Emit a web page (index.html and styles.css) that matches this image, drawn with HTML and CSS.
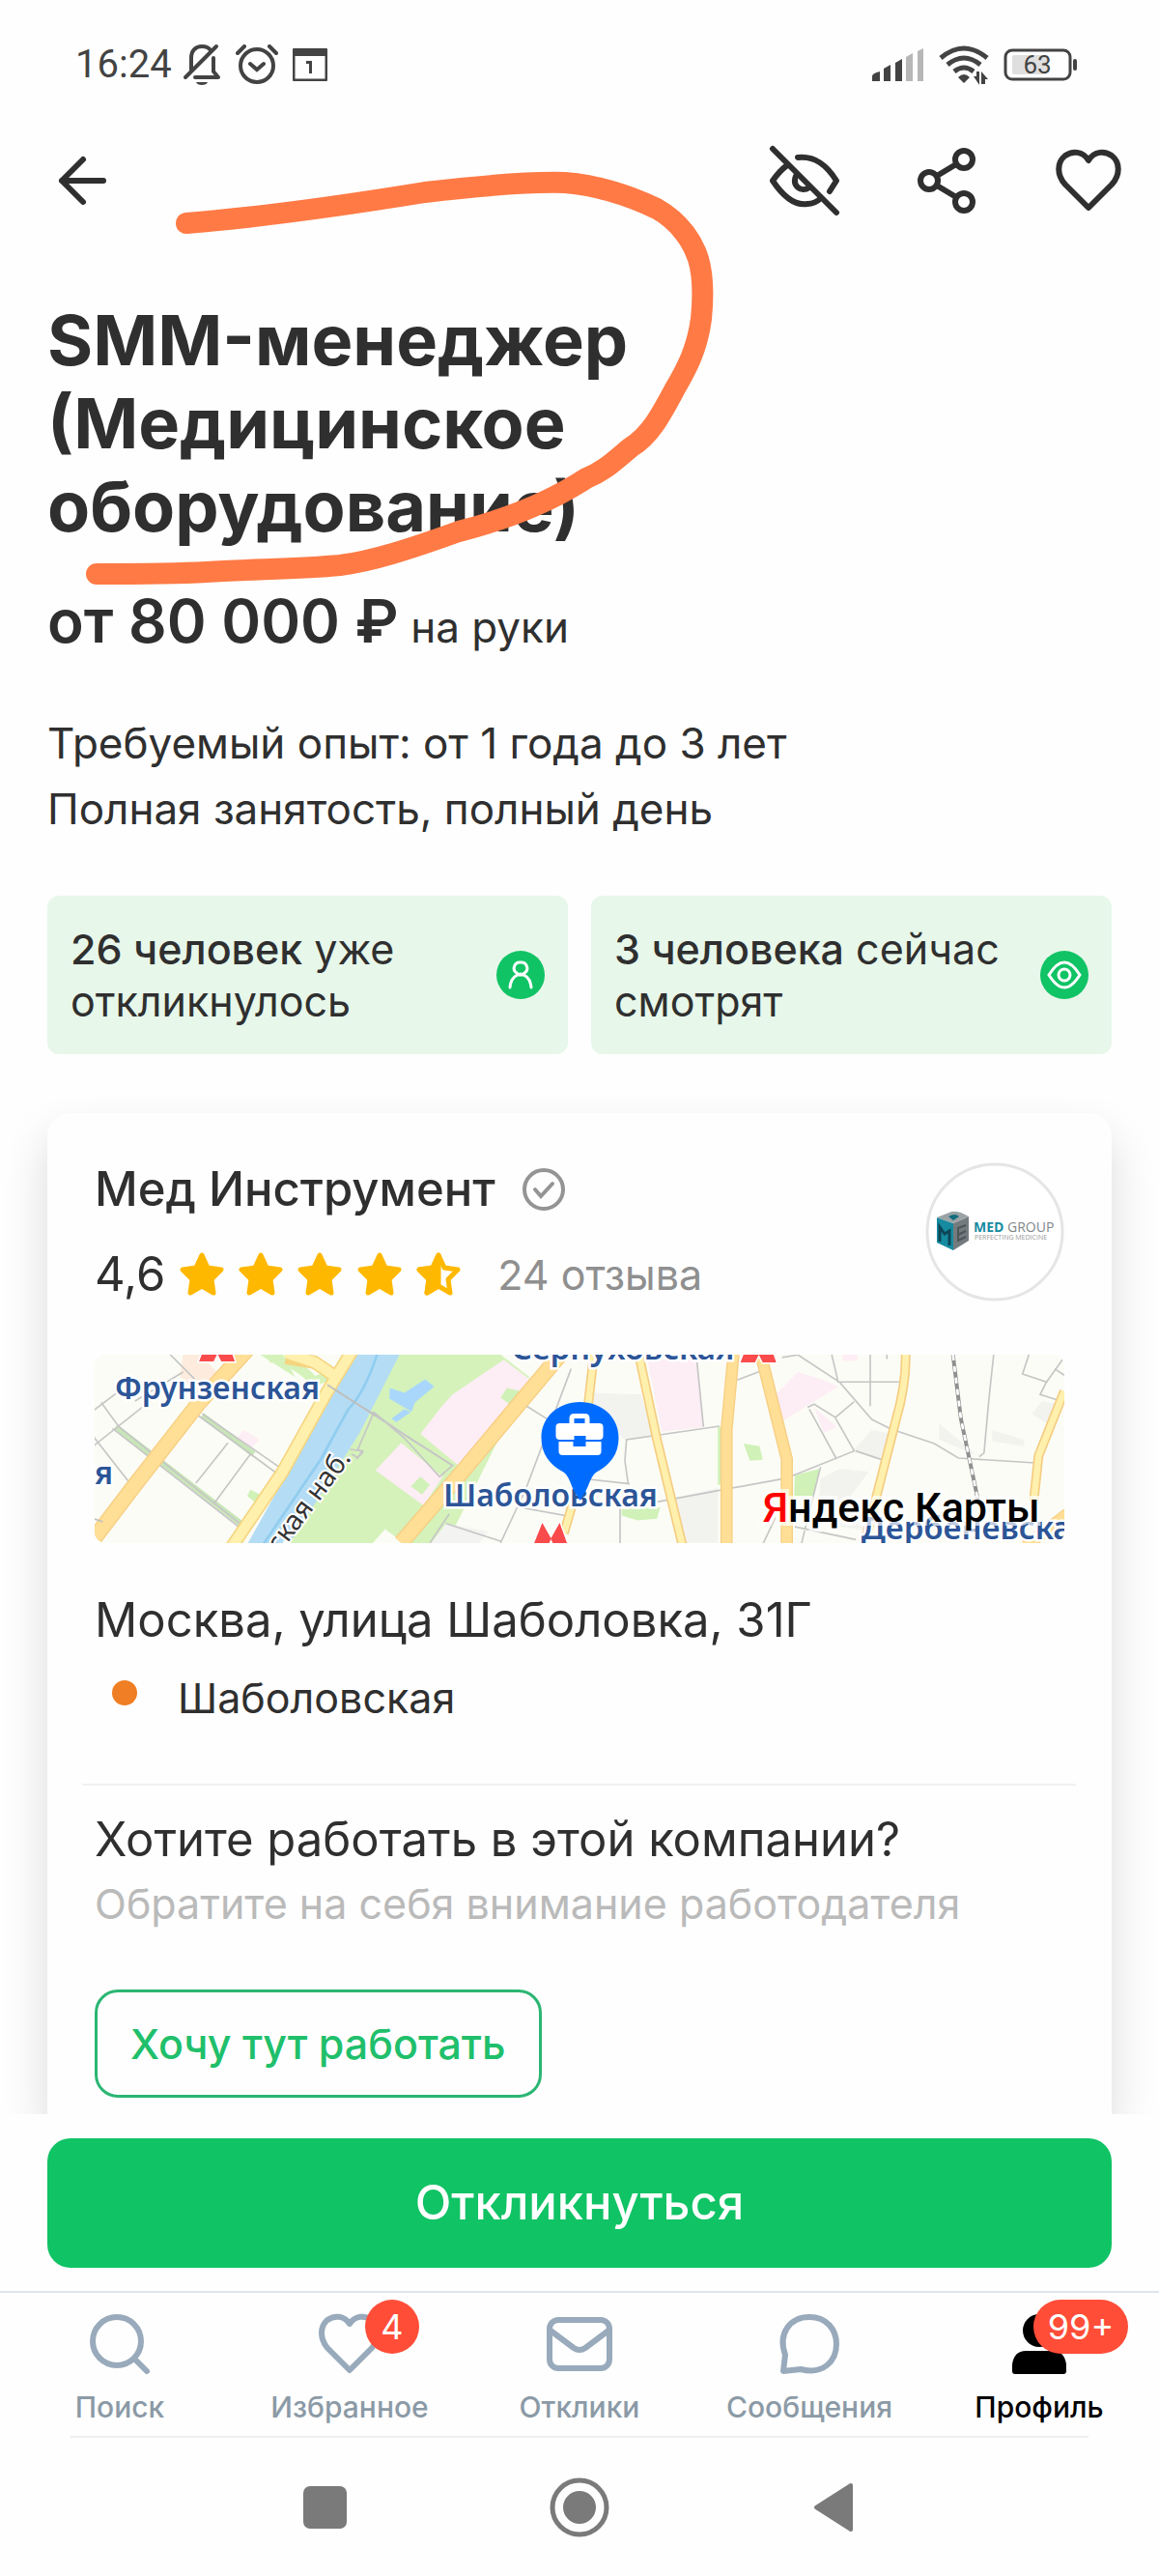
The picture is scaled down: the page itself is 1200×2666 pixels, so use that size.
FILE: index.html
```html
<!DOCTYPE html>
<html lang="ru">
<head>
<meta charset="utf-8">
<meta name="viewport" content="width=device-width, initial-scale=1">
<title>SMM-менеджер (Медицинское оборудование)</title>
<link rel="stylesheet" href="styles.css">
</head>
<body>
<div class="status-bar">
  <div class="status-group status-left">
    <span class="clock">16:24</span>
    <svg class="status-bell" width="40" height="44" viewBox="0 0 40 44" fill="none" stroke="#434343" stroke-width="4" stroke-linecap="round" stroke-linejoin="round"><path d="M9 29V15C9 7 14 3 20 3c4 0 7 1 9 4M32 15v14l5 6H13M3 35L35 3"/><path d="M14 40h12c-1 4-11 4-12 0z" fill="#434343" stroke="none"/></svg>
    <svg class="status-alarm" width="44" height="42" viewBox="0 0 44 42" fill="none" stroke="#434343" stroke-width="4" stroke-linecap="round"><circle cx="22" cy="22" r="17"/><path d="M15 20l7 6 7-6M2 9l7-7M42 9l-7-7"/></svg>
    <svg width="36" height="34" viewBox="0 0 36 34"><rect x="1" y="1" width="34" height="32" rx="2" fill="none" stroke="#434343" stroke-width="3"/><path d="M1 1h34v7H1zM14 13h6v13h-3V16h-3z" fill="#434343"/></svg>
  </div>
  <div class="status-group status-right">
    <svg width="54" height="34" viewBox="0 0 54 34"><path d="M0 34v-5q0-3 8-5v10zM12 34V21l7-4v17zM24 34V15l7-4v23z" fill="#434343"/><path d="M35 34V9l7-4v29zM47 34V3l6-3v34z" fill="#b7b7b7"/></svg>
    <svg width="52" height="42" viewBox="0 0 52 42" fill="none" stroke="#434343" stroke-width="5"><path d="M2 14q24-20 48 0M9 21q17-14 34 0M16 28q10-8 20 0"/><path d="M20 34q6-6 12 0l-6 6zM36 33h3v-5h3v14zM44 41V28l7 8h-3v5z" fill="#434343" stroke="none"/></svg>
    <svg width="77" height="34" viewBox="0 0 77 34"><rect x="9" y="7" width="36" height="20" rx="2" fill="#dfdfdf"/><rect x="2" y="2" width="67" height="30" rx="7" fill="none" stroke="#434343" stroke-width="3"/><rect x="72" y="11" width="4" height="12" rx="2" fill="#434343"/><text x="35" y="26" class="battery-text">63</text></svg>
  </div>
</div>

<header class="toolbar">
  <button class="icon-button" type="button" aria-label="Назад"><svg width="74" height="74" viewBox="0 0 74 74" class="line-icon"><path d="M38 15L16 37l22 22M16 37h43"/></svg></button>
  <div class="toolbar-actions">
    <button class="icon-button" type="button" aria-label="Скрыть вакансию"><svg width="74" height="74" viewBox="0 0 74 74" class="line-icon"><path d="M4 4l66 66M30 13c18-2 30 8 40 24l-7 11M19 21Q11 27 4 37q18 27 36 24 8 0 14-6M28 32c-4 10 5 18 14 12"/></svg></button>
    <button class="icon-button" type="button" aria-label="Поделиться"><svg width="74" height="74" viewBox="0 0 74 74" class="line-icon"><circle cx="19" cy="37" r="9"/><circle cx="55" cy="15" r="9"/><circle cx="55" cy="59" r="9"/><path d="M27 32l20-12M27 42l20 12"/></svg></button>
    <button class="icon-button" type="button" aria-label="В избранное"><svg width="74" height="74" viewBox="0 0 74 74" class="line-icon"><path d="M37 16C31 6 20 6 13 11 4 18 4 31 13 41L37 65 61 41C70 31 70 18 61 11 54 6 43 6 37 16z"/></svg></button>
  </div>
</header>

<main class="content">
  <h1 class="vacancy-title">SMM-менеджер (Медицинское оборудование)</h1>
  <p class="salary"><strong>от 80 000 ₽</strong> на руки</p>
  <div class="conditions">
    <p>Требуемый опыт: от 1 года до 3 лет</p>
    <p>Полная занятость, полный день</p>
  </div>

  <div class="stats">
    <div class="stat">
      <p><b>26 человек</b> уже откликнулось</p>
      <svg width="50" height="50" viewBox="0 0 50 50"><circle cx="25" cy="25" r="25" fill="#10c365"/><path d="M25 12a6 6 0 0 1 4 11q-4 4-8 0a6 6 0 0 1 4-11zM14 38q1-12 11-14 10 2 11 14" fill="none" stroke="#fff" stroke-width="3" stroke-linecap="round"/></svg>
    </div>
    <div class="stat">
      <p><b>3 человека</b> сейчас смотрят</p>
      <svg width="50" height="50" viewBox="0 0 50 50" stroke="#fff" stroke-width="3"><circle cx="25" cy="25" r="25" fill="#10c365" stroke="none"/><path d="M9 25Q17 12 25 12t16 13Q33 38 25 38T9 25z" fill="none"/><circle cx="25" cy="25" r="6" fill="none"/></svg>
    </div>
  </div>

  <section class="card">
    <div class="company">
      <div class="company-info">
        <h2 class="company-name">Мед Инструмент
          <svg width="46" height="46" viewBox="0 0 46 46" fill="none" stroke="#949494" stroke-width="4" stroke-linecap="round"><circle cx="23" cy="23" r="20"/><path d="M14 23l6 7 12-13"/></svg>
        </h2>
        <div class="rating">
          <span>4,6</span>
          <svg class="stars" width="292" height="48" viewBox="0 0 292 48" fill="#ffb800" stroke="#ffb800" stroke-width="5" stroke-linejoin="round">
            <defs><path id="star" d="M24 4l6 13 14 2-10 10 2 14-12-7-12 7 2-14L4 19l14-2z"/></defs>
            <use href="#star"/><use href="#star" x="61"/><use href="#star" x="122"/><use href="#star" x="184"/><use href="#star" x="245" fill="none"/>
            <path d="M269 4v32l-12 7 2-14-10-10 14-2z"/>
          </svg>
          <a class="reviews" href="#reviews">24 отзыва</a>
        </div>
      </div>
      <svg class="company-logo" width="144" height="144" viewBox="0 0 144 144">
        <circle cx="72" cy="72" r="70" fill="#fff" stroke="#e5e5e5" stroke-width="3"/>
        <path d="M12 57l17 6v28l-17-8z" fill="#168ba0"/><path d="M29 63l16-7v25l-16 10z" fill="#747b7f"/><path d="M12 57l15-6q8-1 18 5l-16 7z" fill="#9ba3a6"/><path d="M24 56q7-4 11 0l-6 4z" fill="#126b7e"/><path d="M15 82V67l5 7 5-3v15" stroke="#0d4657" stroke-width="3" fill="none"/><path d="M42 65l-8 3v13l8-4M34 75l8-4" stroke="#4d5558" stroke-width="2" fill="none"/>
        <text x="50" y="72" class="logo-name"><tspan class="logo-med">MED</tspan> GROUP</text>
        <text x="51" y="80" class="logo-tagline">PERFECTING MEDICINE</text>
      </svg>
    </div>

    <svg class="map" viewBox="0 0 1003 195" preserveAspectRatio="xMidYMid slice" role="img" aria-label="Карта: улица Шаболовка, 31Г">
      <rect width="1003" height="195" fill="#fbfcf5"/>
      <g transform="translate(-18 -22) scale(.3317 .3333)" fill="none">
        <path d="M330 66h50l70 66-70 60-60-60z" fill="#fdecdd"/>
        <path d="M570 66h80l150 70-50 80-70-80zM990 66h330l90 70-260 520-130-4-60-45-40 45H640z" fill="#d4f2ba"/>
        <path d="M1170 190L1330 82l80 60-220 270-120-100 70-90zM1010 340l130 105-60 90-150-110zM520 300l48 30-25 25-45-30z" fill="#fdedf4"/>
        <path d="M1150 590l130 25-30 40h-150z" fill="#f3f3f1"/>
        <path d="M1070 445l30 25-25 30-35-25zM540 485l30 15-15 25-25-20zM1340 170l45 10-30 45-35-25z" fill="#d0f1b8"/>
        <path d="M860 66h145L880 310 660 655H530L690 370z" fill="#b4dcf5"/>
        <path d="M935 66q-40 120-90 170L760 390 580 655" stroke="#90cdf0" stroke-width="8"/>
        <path d="M975 170l45 15 65-42 28 22-60 50-10 28-70-40zM1020 235l20 10-45 30-15-10z" fill="#a9d7fb"/>
        <path d="M640 66l150 20 50-10-95 130-65-70z" fill="#fbfcf5"/>
        <path d="M600 75q80 10 140 75l45-20" stroke="#d4f2ba" stroke-width="30"/>
        <path d="M120 290l390 300M390 255l160 120" stroke="#c8e6b7" stroke-width="18"/>
        <g stroke="#c6c6c6" stroke-width="5">
          <path d="M290 66l80 80M50 240l80-60M50 350l190-150M330 120L180 210M50 320l110 140M75 215l55 75 390 310M110 295l400 310M370 250l260 190M390 250l240 165M470 340L370 465M540 375L425 530M780 160l390 250-40 35-110-120-95-80-50 115 15 10-20 20"/>
          <path d="M1540 110l-140 370-80 170M1150 590l170 55M1400 225l80 50M1380 540l140 25M1160 560l-60 90"/>
          <path d="M850 360l40 5-15 20-20-10M920 245l100 70 150 95"/>
        </g>
        <path d="M50 640L180 470 380 215 530 50M1010 650L1200 430 1520 50" stroke="#f7ce83" stroke-width="50"/>
        <path d="M50 640L180 470 380 215 530 50M1010 650L1200 430 1520 50" stroke="#ffdf95" stroke-width="42"/>
        <path d="M480 665L640 430 780 180 860 50M800 130L740 90 650 75" stroke="#f5d580" stroke-width="42"/>
        <path d="M480 665L640 430 780 180 860 50M800 130L740 90 650 60" stroke="#fff0ad" stroke-width="32"/>
        <path d="M780 160l150 95M50 575l30 10" stroke="#bebebe" stroke-width="5"/>
      </g>
      <g transform="translate(502 -22) scale(.3317 .3333)" fill="none">
        <path d="M210 80h155l20 210-130 15zM610 190l70-70 65 20 60 25-170 105zM730 230l70 60-40 20zM820 66h45v20h-45z" fill="#fdedf4"/>
        <path d="M40 185l150 5 40 130-90 10-110-90zM300 510l130-30v170H310zM750 450l60-30 90 10-60 80 50 100-150-20zM850 365l60-65 55 10-20 80zM1410 250l30-40 50 10-20 70zM1120 280l120 100-120-50zM1285 300l100 30v20l-100-15z" fill="#f2f3ef"/>
        <path d="M510 342l50 8 10 42-40 3zM670 440l78-20-20 85h-60zM130 545l120-5-10 35-60 5-50-15zM430 290h15v180h-15z" fill="#d0f1b8"/>
        <g stroke="#c6c6c6" stroke-width="5">
          <path d="M0 450l155 17M150 465l-10-70 5-65 290-42M125 660V540M240 523l410-75M365 90l20 200M490 145l80-30M630 75l50-8 130 85 100 115 60 30 135 45 75 45 240 15M785 66l20 85h190M905 66v160M957 66v14M710 230l20-10 65 40 60 105-200 80M795 262l60-50M715 235l85 155M860 365l90 30M750 415l-60 240M570 655l40-85M670 600l190 40M1290 66l-15 140-15 165-15 12M1400 66l-20 60 75 25 50-70M1455 150l-20 40 65 20M1480 110l30 20"/>
        </g>
        <path d="M45 50L0 450-50 620M180 50l60 280 80 330M1015 50q5 100-30 220L890 640M1510 180l-80 200-15 140" stroke="#f5cd82" stroke-width="30"/>
        <path d="M45 50L0 450-50 620M180 50l60 280 80 330M1015 50q5 100-30 220L890 640M1510 180l-80 200-15 140" stroke="#fff0ad" stroke-width="20"/>
        <path d="M480 50l-23 250v360M560 50l85 340v270M1520 560l-130 100" stroke="#f7ce83" stroke-width="38"/>
        <path d="M480 50l-23 250v360M560 50l85 340v270M1520 560l-130 100" stroke="#ffdf95" stroke-width="30"/>
        <path d="M1163 66l25 200 55 260" stroke="#909090" stroke-width="12"/>
        <path d="M1163 66l25 200 55 260" stroke="#fff" stroke-width="8" stroke-dasharray="18 18"/>
      </g>
      <g class="map-label">
        <text x="21" y="46">Фрунзенская</text>
        <text x="19" y="134" text-anchor="end">ая</text>
        <text x="431" y="5" class="map-label-wide">Серпуховская</text>
        <text x="361" y="157">Шаболовская</text>
        <text x="793" y="191" class="map-label-wide">Дербеневская</text>
      </g>
      <text class="map-street" transform="translate(181 220) rotate(-53)">нская наб.</text>
      <g fill="#f94b4b" stroke="#fff" stroke-width="3" paint-order="stroke"><path id="metro" d="M0 8L10-17 19-1 28-17 37 8H23l-4-8-4 8z" transform="translate(108 -1)"/><use href="#metro" x="40" y="1" transform="translate(520)"/><use href="#metro" x="343" y="188" transform="translate(2 4)"/></g>
      <path d="M502 49c22 0 40 15 40 37 0 17-9 28-22 35-7 4-8 13-12 20l-6 10-6-10c-4-7-5-16-12-20-13-7-22-18-22-35 0-22 18-37 40-37z" fill="#006cff"/>
      <path d="M477 75q0-4 4-4h10v-5q0-5 5-5h11q5 0 5 5v5h10q4 0 4 4v9q0 4-4 4h-14v-4h-12v4h-15q-4 0-4-4zM496 66v5h11v-5zM480 90h15v5h13v-5h16v10q0 4-4 4h-36q-4 0-4-4z" fill="#fff" fill-rule="evenodd"/>
      <text x="691" y="173" class="map-brand"><tspan class="map-brand-first">Я</tspan>ндекс Карты</text>
    </svg>

    <p class="address">Москва, улица Шаболовка, 31Г</p>
    <p class="metro">Шаболовская</p>
    <hr class="divider">
    <h2 class="invite-title">Хотите работать в этой компании?</h2>
    <p class="invite-text">Обратите на себя внимание работодателя</p>
    <button class="outline-button" type="button">Хочу тут работать</button>
  </section>
</main>

<footer class="bottom">
  <div class="apply"><button class="apply-button" type="button">Откликнуться</button></div>
  <nav class="tabs">
    <a class="tab" href="#search"><span class="tab-icon"><svg width="72" height="72" viewBox="0 0 72 72" class="tab-line"><circle cx="33" cy="33" r="25"/><path d="M51 51l13 13"/></svg></span>Поиск</a>
    <a class="tab" href="#favorites"><span class="tab-icon"><svg width="72" height="72" viewBox="0 0 72 72" class="tab-line"><path d="M36 15C30 6 20 6 13 11 5 18 5 30 13 40L36 63 59 40C67 30 67 18 59 11 52 6 42 6 36 15z"/></svg><span class="badge badge-round">4</span></span>Избранное</a>
    <a class="tab" href="#responses"><span class="tab-icon"><svg width="72" height="72" viewBox="0 0 72 72" class="tab-line"><rect x="5" y="11" width="62" height="50" rx="9"/><path d="M6 22l24 18q6 4 12 0l24-18"/></svg></span>Отклики</a>
    <a class="tab" href="#messages"><span class="tab-icon"><svg width="72" height="72" viewBox="0 0 72 72" class="tab-line"><path d="M9 64l2-17C3 25 16 8 36 8c18 0 28 13 28 28 0 18-14 32-37 26z"/></svg></span>Сообщения</a>
    <a class="tab tab-active" href="#profile"><span class="tab-icon"><svg width="72" height="72" viewBox="0 0 72 72"><circle cx="36" cy="22" r="17"/><path d="M8 64V57q2-14 14-14h28q12 0 14 14v7q0 3-3 3H11q-3 0-3-3z"/></svg><span class="badge badge-wide">99+</span></span>Профиль</a>
  </nav>
  <div class="system-nav">
    <button class="icon-button" type="button" aria-label="Недавние"><svg width="62" height="62" viewBox="0 0 62 62"><rect x="9" y="9" width="45" height="44" rx="7" fill="#7a7a7a"/></svg></button>
    <button class="icon-button" type="button" aria-label="Домой"><svg width="62" height="62" viewBox="0 0 62 62"><circle cx="31" cy="31" r="28" fill="none" stroke="#7a7a7a" stroke-width="5"/><circle cx="31" cy="31" r="17" fill="#7a7a7a"/></svg></button>
    <button class="icon-button" type="button" aria-label="Назад"><svg width="62" height="62" viewBox="0 0 62 62"><path d="M12 31L48 8v46z" fill="#7a7a7a" stroke="#7a7a7a" stroke-width="4" stroke-linejoin="round"/></svg></button>
  </div>
</footer>

<svg class="marker" width="670" height="440" viewBox="0 0 670 440" aria-hidden="true"><path d="M113 61C200 54 280 42 360 29C420 22 475 18 505 19C540 22 575 34 600 46C625 60 638 82 643 98C649 118 648 140 646 160C642 190 632 210 619 232C605 258 594 280 573 293C555 308 545 318 527 325C495 346 450 366 395 380C345 398 305 411 272 415C230 419 180 419 134 422C100 424 60 424 20 424"/></svg>
</body>
</html>
```
FILE: styles.css
```css
* { box-sizing: border-box; }

body {
  margin: 0;
  min-height: 100vh;
  display: flex;
  flex-direction: column;
  position: relative;
  background: #fefefe;
  color: #2f2f2f;
  font-family: Inter, "Liberation Sans", sans-serif;
  font-size: 43px;
  line-height: 60px;
}

p, h1, h2 { margin: 0; }
svg { display: block; flex: none; }
button { font: inherit; cursor: pointer; }
a { color: inherit; text-decoration: none; }

.icon-button {
  display: flex;
  padding: 0;
  border: 0;
  background: none;
}

/* Status bar */
.status-bar {
  display: flex;
  justify-content: space-between;
  align-items: center;
  height: 133px;
  padding: 0 84px 0 78px;
}
.status-group { display: flex; align-items: center; }
.status-left { gap: 15px; }
.status-right { gap: 15px; }
.clock {
  font-family: Roboto, sans-serif;
  font-size: 40px;
  color: #434343;
}
.status-bell { margin-left: -4px; }
.battery-text {
  font-family: Roboto, sans-serif;
  font-size: 26px;
  fill: #434343;
  text-anchor: middle;
}

/* Toolbar */
.toolbar {
  display: flex;
  justify-content: space-between;
  align-items: center;
  height: 108px;
  padding: 0 36px 0 48px;
}
.toolbar-actions { display: flex; gap: 73px; }
.line-icon {
  fill: none;
  stroke: #2f2f2f;
  stroke-width: 6;
  stroke-linecap: round;
  stroke-linejoin: round;
}

/* Vacancy */
.content {
  flex: 1;
  padding: 68px 49px 0;
  overflow: hidden;
}
.vacancy-title {
  font-size: 72px;
  line-height: 86px;
  font-weight: 700;
}
.salary { margin-top: 38px; font-size: 44px; line-height: 76px; }
.salary strong { font-size: 62px; font-weight: 600; }
.conditions { margin-top: 48px; font-size: 44px; line-height: 68px; }

.stats {
  display: grid;
  grid-template-columns: 1fr 1fr;
  gap: 24px;
  margin-top: 56px;
}
.stat {
  display: flex;
  align-items: center;
  justify-content: space-between;
  padding: 28px 24px;
  border-radius: 12px;
  background: #e7f7ea;
  line-height: 54px;
}
.stat b { font-weight: 500; }

/* Company card */
.card {
  margin-top: 61px;
  padding: 47px 49px 17px;
  border-radius: 24px 24px 0 0;
  background: #fefefe;
  box-shadow: 0 24px 48px rgba(0, 0, 0, 0.14);
}
.company {
  display: flex;
  justify-content: space-between;
  align-items: center;
}
.company-info { display: grid; gap: 24px; }
.company-name {
  display: flex;
  align-items: center;
  gap: 27px;
  font-size: 49px;
  line-height: 64px;
  font-weight: 500;
}
.rating {
  display: flex;
  align-items: center;
  gap: 14px;
  font-size: 49px;
  line-height: 64px;
}
.stars { margin-right: 24px; }
.reviews { font-size: 43px; color: #8f8f8f; }
.logo-name {
  font-family: "Open Sans", sans-serif;
  font-size: 14px;
  fill: #80868a;
}
.logo-med { font-weight: 700; fill: #168ba0; }
.logo-tagline {
  font-family: "Open Sans", sans-serif;
  font-size: 7px;
  fill: #9a9a9a;
}

.map {
  width: 100%;
  height: 195px;
  margin-top: 51px;
  border-radius: 12px;
}
.map-label {
  font-family: "Noto Sans", sans-serif;
  font-size: 32px;
  font-weight: 600;
  fill: #2c5597;
  stroke: #fff;
  stroke-width: 5px;
  paint-order: stroke;
}
.map-label-wide { font-size: 33px; }
.map-street {
  font-family: "Noto Sans", sans-serif;
  font-size: 28px;
  fill: #333;
  stroke: #fff;
  stroke-width: 4px;
  paint-order: stroke;
}
.map-brand {
  font-family: Roboto, sans-serif;
  font-size: 43px;
  font-weight: 500;
  fill: #000;
  stroke: rgba(255, 255, 255, 0.7);
  stroke-width: 8px;
  paint-order: stroke;
}
.map-brand-first { fill: #f00; }

.address {
  margin-top: 48px;
  font-size: 49px;
  line-height: 64px;
}
.metro {
  display: flex;
  align-items: center;
  gap: 42px;
  margin-top: 18px;
  padding-left: 18px;
}
.metro::before {
  content: "";
  width: 26px;
  height: 26px;
  margin-bottom: 10px;
  border-radius: 50%;
  background: #ef7e24;
}
.divider {
  margin: 59px -12px 24px;
  border: 0;
  border-top: 2px solid #f1f1f1;
}
.invite-title {
  font-size: 49px;
  line-height: 64px;
  font-weight: 400;
}
.invite-text { margin-top: 4px; color: #bababa; }
.outline-button {
  height: 112px;
  margin-top: 59px;
  padding: 0 34px;
  border: 3px solid #2bb673;
  border-radius: 24px;
  background: none;
  color: #20bf6b;
  font-weight: 500;
}

/* Bottom area */
.apply {
  padding: 25px 49px 24px;
  border-bottom: 2px solid #e0e5e8;
}
.apply-button {
  width: 100%;
  height: 134px;
  border: 0;
  border-radius: 24px;
  background: #10c365;
  color: #fff;
  font-size: 49px;
  font-weight: 500;
}
.tabs {
  display: grid;
  grid-template-columns: repeat(5, 1fr);
  padding: 17px 5px 12px;
}
.tab {
  display: flex;
  flex-direction: column;
  align-items: center;
  gap: 11px;
  color: #8b9aa6;
  font-size: 30px;
  line-height: 36px;
  font-weight: 500;
}
.tab-active { color: #000; }
.tab-icon { position: relative; }
.tab-line {
  fill: none;
  stroke: #98aabb;
  stroke-width: 6;
  stroke-linecap: round;
  stroke-linejoin: round;
}
.badge {
  position: absolute;
  top: -10px;
  height: 56px;
  border-radius: 28px;
  background: #ff4d38;
  color: #fff;
  font-size: 36px;
  line-height: 56px;
  font-weight: 400;
  text-align: center;
}
.badge-round { left: 52px; width: 56px; }
.badge-wide { left: 30px; width: 98px; }

.system-nav {
  display: grid;
  grid-template-columns: repeat(3, 264px);
  justify-content: center;
  justify-items: center;
  align-items: center;
  height: 145px;
  margin: 0 73px;
  border-top: 2px solid #eee;
}

/* Freehand highlight over the title */
.marker {
  position: absolute;
  left: 80px;
  top: 170px;
  fill: none;
  stroke: #ff7a45;
  stroke-width: 22;
  stroke-linecap: round;
  stroke-linejoin: round;
  pointer-events: none;
}
```
